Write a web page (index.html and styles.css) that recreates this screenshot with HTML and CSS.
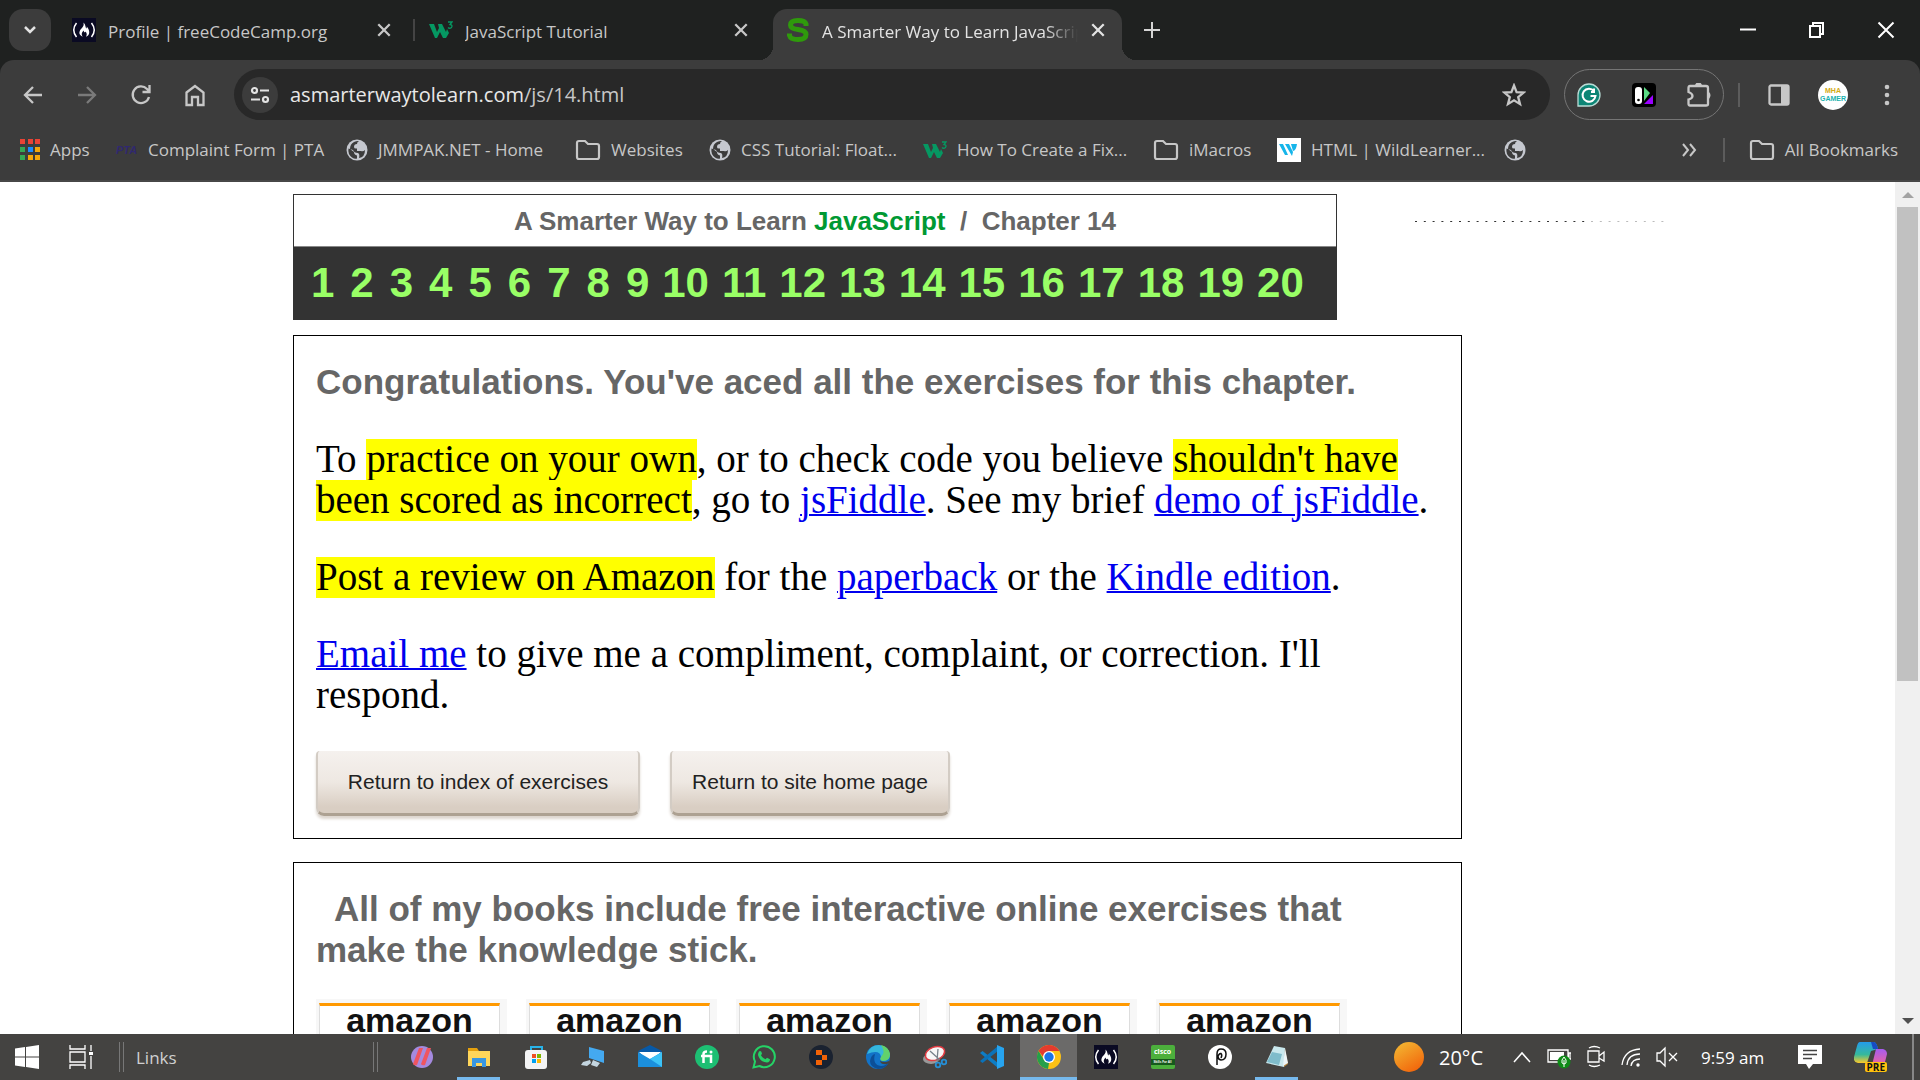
FILE: index.html
```html
<!DOCTYPE html>
<html lang="en">
<head>
<meta charset="utf-8">
<title>A Smarter Way to Learn JavaScript</title>
<link rel="stylesheet" href="styles.css">
</head>
<body>
<svg class="defs" aria-hidden="true">
  <symbol id="x" viewBox="0 0 14 14"><path d="M2 2L12 12M12 2L2 12" fill="none" stroke="currentColor" stroke-width="2"/></symbol>
  <symbol id="fcc" viewBox="0 0 24 24"><path fill="#0a0a23" d="M0 0h24v24H0z"/><path d="M4.500 5Q-1 12 4.500 19M19.500 5Q25 12 19.500 19" fill="none" stroke="#fff" stroke-width="1.500"/><path fill="#fff" d="M11.500 4.500C14 7 13 9 14.500 10.500C15 9.500 14.800 9 14.600 8.500C18 12 18.500 17 14 18.700C15.500 16 14.500 14.500 13 13.500C13 15 11.500 14.500 12 12.500C9 14.500 9.500 17 10.800 18.700C5.500 16.500 7.500 12.500 9.500 10.500C11.500 8.500 12 7 11.500 4.500z"/></symbol>
  <symbol id="w3" viewBox="0 0 24 24"><path fill="#059862" d="M0 6h5l3 8 2-4-1-4h4l4 8 1-3 2 4-3 5h-3l-3-6-3 6H6z"/><path d="M19 4h4l-2 2.500q3 .5 1.500 3Q20.500 11 19 9.500" fill="none" stroke="#059862" stroke-width="1.300"/></symbol>
  <symbol id="globe" viewBox="0 0 22 22"><circle cx="11" cy="11" r="10.500" fill="#c5c8cf"/><path fill="#3c3c3c" d="M13 2q-2 1-2 3-3 0-3 3 0 2 3 1.500V12h4q2 1 4-1 0 7-6 8 1-4-1-5-4 0-5-3L2.500 9.500Q1.500 15 6 18.500q3 2 5 1v-3q-3-1-3-3.500L4 10q0-5 4-7 3-1.500 5-1z"/></symbol>
  <symbol id="folder" viewBox="0 0 26 22"><path d="M2 18V4q0-2 2-2h6l3 3h9q2 0 2 2v11q0 2-2 2H4q-2 0-2-2z" fill="none" stroke="#c7c7c7" stroke-width="2.200"/></symbol>
</svg>
<header class="browser">
  <div class="tabstrip">
    <button class="tabsearch" aria-label="Search tabs"><svg width="14" height="10" viewBox="0 0 14 10"><path d="M2 2l5 5 5-5" fill="none" stroke="#e3e3e3" stroke-width="2.500"/></svg></button>
    <div class="tab"><svg class="i24"><use href="#fcc"/></svg><span class="tabtitle">Profile | freeCodeCamp.org</span><button class="close" aria-label="Close tab"><svg width="16" height="16"><use href="#x"/></svg></button></div>
    <div class="tab second"><svg class="i24"><use href="#w3"/></svg><span class="tabtitle">JavaScript Tutorial</span><button class="close" aria-label="Close tab"><svg width="16" height="16"><use href="#x"/></svg></button></div>
    <div class="tab active"><svg class="i24" viewBox="0 0 24 24"><path d="M20 8V6q-1-3.500-8-3.500-7.500 0-7.500 4.500 0 3.500 7.500 4.500 8 1 8 5 0 5-8 5-7.500 0-8.500-4v-2" fill="none" stroke="#2f9a0c" stroke-width="5"/></svg><span class="tabtitle">A Smarter Way to Learn JavaScript</span><button class="close" aria-label="Close tab"><svg width="16" height="16"><use href="#x"/></svg></button></div>
    <button class="newtab" aria-label="New tab"><svg width="16" height="16" viewBox="0 0 16 16"><path d="M8 0v16M0 8h16" stroke="#d5d5d5" stroke-width="2"/></svg></button>
    <div class="winbuttons">
      <button aria-label="Minimize"><svg width="18" height="18"><path d="M1 8.500h16" stroke="#fff" stroke-width="2"/></svg></button>
      <button aria-label="Restore"><svg width="18" height="18"><path d="M2 5h10v11H2zM5 4V2h10v11h-2" fill="none" stroke="#fff" stroke-width="2"/></svg></button>
      <button aria-label="Close"><svg width="18" height="18"><path d="M1.500 1.500l15 15M16.500 1.500l-15 15" stroke="#fff" stroke-width="2"/></svg></button>
    </div>
  </div>
  <div class="toolbar">
    <nav class="navbuttons">
      <button aria-label="Back"><svg class="i24" viewBox="0 0 24 24"><path d="M21 12H4M12 4l-8 8 8 8" fill="none" stroke="#c7c7c7" stroke-width="2.300"/></svg></button>
      <button aria-label="Forward"><svg class="i24" viewBox="0 0 24 24"><path d="M3 12h17M12 4l8 8-8 8" fill="none" stroke="#7a7a7a" stroke-width="2.300"/></svg></button>
      <button aria-label="Reload"><svg class="i24" viewBox="0 0 24 24"><path d="M20 14a8.300 8.300 0 1 1-2-8l2.500 2.500M20.500 2v7h-7" fill="none" stroke="#c7c7c7" stroke-width="2.300"/></svg></button>
      <button aria-label="Home"><svg class="i24" viewBox="0 0 24 24"><path d="M3.500 9.500L12 3l8.500 6.500V22H15v-8H9v8H3.500z" fill="none" stroke="#c7c7c7" stroke-width="2.300"/></svg></button>
    </nav>
    <div class="omnibox">
      <button class="siteinfo" aria-label="Site information"><svg width="20" height="18" viewBox="0 0 20 18"><g fill="none" stroke="#e3e3e3" stroke-width="2.200"><circle cx="4.500" cy="4.500" r="2.500"/><path d="M10 4.500h9M1 13.500h9"/><circle cx="15.500" cy="13.500" r="2.500"/></g></svg></button>
      <div class="url" role="textbox" aria-label="Address">asmarterwaytolearn.com<span>/js/14.html</span></div>
      <button aria-label="Bookmark this tab"><svg class="i24" viewBox="0 0 24 24"><path d="M12 2.500l2.600 6.600 7 .5-5.400 4.500 1.800 7L12 17.300 6 21.100l1.800-7L2.400 9.600l7-.5z" fill="none" stroke="#c7c7c7" stroke-width="2.300"/></svg></button>
    </div>
    <div class="extensions">
      <button aria-label="Grammar checker"><svg class="i24" viewBox="0 0 24 24"><path d="M1 23V12a11 11 0 1 1 11 11z" fill="#0c8575" stroke="#b9dcd6" stroke-width="1.300"/><path d="M17 8a6.500 6.500 0 1 0 1.500 5h-5M17 5.500V9h-3" fill="none" stroke="#fff" stroke-width="2"/></svg></button>
      <button aria-label="Color picker"><svg class="i24" viewBox="0 0 24 24"><rect width="24" height="24" rx="4"/><rect x="3" y="4" width="7" height="17" rx="3" fill="#fff"/><path d="M12 4l6 6-6 8z" fill="#5bdc86"/><path d="M12 21l9-9v9z" fill="#9a00ff"/><circle cx="6.500" cy="17" r="1.300"/></svg></button>
      <button aria-label="Extensions"><svg class="i24" viewBox="0 0 24 24"><path d="M3 3h16q2 0 2 2v16q0 1.500-2 1.500H3q-1.500 0-1.500-2v-4q4-1 4-3.500t-4-4V5Q1.500 3 3 3z" fill="none" stroke="#c7c7c7" stroke-width="2.300"/><path d="M8 3a3 3 0 0 1 7 0zM22 9q3 3 0 7z" fill="#c7c7c7"/></svg></button>
    </div>
    <div class="tools">
      <i class="vsep"></i>
      <button aria-label="Side panel"><svg width="22" height="22"><rect x="1.500" y="1.500" width="19" height="19" rx="1.500" fill="none" stroke="#c7c7c7" stroke-width="2.300"/><path d="M13 1h8v20h-8z" fill="#c7c7c7"/></svg></button>
      <button class="avatar" aria-label="Profile"><span class="gold">MHA</span><span>GAMER</span></button>
      <button class="menu" aria-label="Menu"><svg width="6" height="22"><g fill="#c7c7c7"><circle cx="3" cy="3" r="2.300"/><circle cx="3" cy="11" r="2.300"/><circle cx="3" cy="19" r="2.300"/></g></svg></button>
    </div>
  </div>
  <nav class="bookmarks">
    <a href="#"><svg width="20" height="22"><path fill="#ea4335" d="M0 0h5v5H0zM8 0h5v5H8zM15 0h5v5h-5z"/><path fill="#34a853" d="M0 8h5v5H0zM0 16h5v5H0z"/><path fill="#1a8cff" d="M8 8h5v5H8z"/><path fill="#f5a70a" d="M15 8h5v5h-5zM8 16h5v5H8zM15 16h5v5h-5z"/></svg>Apps</a>
    <a href="#"><span class="pta">PTA</span>Complaint Form | PTA</a>
    <a href="#"><svg class="i22"><use href="#globe"/></svg>JMMPAK.NET - Home</a>
    <a href="#"><svg class="fold"><use href="#folder"/></svg>Websites</a>
    <a href="#"><svg class="i22"><use href="#globe"/></svg>CSS Tutorial: Float...</a>
    <a href="#"><svg class="i24"><use href="#w3"/></svg>How To Create a Fix...</a>
    <a href="#"><svg class="fold"><use href="#folder"/></svg>iMacros</a>
    <a href="#"><svg class="i24" viewBox="0 0 24 24"><path fill="#fff" d="M0 0h24v24H0z"/><path fill="#16b5ea" d="M2 6h4l5 11H8zM8 6h4l4 8-1 4zM14 6h6q-1 7-4 7z"/></svg>HTML | WildLearner...</a>
    <a href="#" aria-label="Bookmark"><svg class="i22"><use href="#globe"/></svg></a>
    <button class="more" aria-label="More bookmarks"><svg width="16" height="14"><path d="M2 1l5 6-5 6M9 1l5 6-5 6" fill="none" stroke="#c7c7c7" stroke-width="2"/></svg></button>
    <i class="vsep"></i>
    <a href="#"><svg class="fold"><use href="#folder"/></svg>All Bookmarks</a>
  </nav>
</header>
<div class="viewport">
  <main class="page">
    <div class="top">
      <section class="chapter">
        <h1>A Smarter Way to Learn <b>JavaScript</b>&nbsp; /&nbsp; Chapter 14</h1>
        <nav class="numbers">
          <div class="ones"><a href="#">1</a><a href="#">2</a><a href="#">3</a><a href="#">4</a><a href="#">5</a><a href="#">6</a><a href="#">7</a><a href="#">8</a><a href="#">9</a></div>
          <div class="tens"><a href="#">10</a><a href="#">11</a><a href="#">12</a><a href="#">13</a><a href="#">14</a><a href="#">15</a><a href="#">16</a><a href="#">17</a><a href="#">18</a><a href="#">19</a><a href="#">20</a></div>
        </nav>
      </section>
      <svg class="dots" width="250" height="1"><path d="M0 .5h170" stroke="#333" stroke-dasharray="2 6.800"/><path d="M176 .5h74" stroke="#bbb" stroke-dasharray="2 6.800"/></svg>
    </div>
    <section class="box">
      <h2>Congratulations. You've aced all the exercises for this chapter.</h2>
      <p>To <mark>practice on your own</mark>, or to check code you believe <mark>shouldn't have<br>been scored as incorrect</mark>, go to <a href="#">jsFiddle</a>. See my brief <a href="#">demo of jsFiddle</a>.</p>
      <p><mark>Post a review on Amazon</mark> for the <a href="#">paperback</a> or the <a href="#">Kindle edition</a>.</p>
      <p><a href="#">Email me</a> to give me a compliment, complaint, or correction. I'll<br>respond.</p>
      <div class="returns"><button class="wide">Return to index of exercises</button><button>Return to site home page</button></div>
    </section>
    <section class="box">
      <h2 class="books">All of my books include free interactive online exercises that<br>make the knowledge stick.</h2>
      <div class="ads">
        <a href="#"><span>amazon</span></a><a href="#"><span>amazon</span></a><a href="#"><span>amazon</span></a><a href="#"><span>amazon</span></a><a href="#"><span>amazon</span></a>
      </div>
    </section>
  </main>
  <div class="scrollbar"><i class="up"></i><i class="thumb"></i><i class="down"></i></div>
</div>
<footer class="taskbar">
  <button class="start" aria-label="Start"><svg class="i24" viewBox="0 0 24 24"><path fill="#fff" d="M0 3.500l10-1.500v9.500H0zM11 2l13-2v11.500H11zM0 12.500h10V22L0 20.500zM11 12.500h13V24l-13-2z"/></svg></button>
  <button class="taskview" aria-label="Task view"><svg width="26" height="24"><path d="M1 0v4h15V0M1 24v-4h15v4M1 7h15v10H1zM22 0v6M22 11v13" fill="none" stroke="#fff" stroke-width="1.300"/><path fill="#fff" d="M20 7h4v3h-4z"/></svg></button>
  <i class="dsep"></i><span class="links">Links</span><i class="dsep"></i>
  <div class="apps">
    <button aria-label="Opera add-on"><svg class="i24" viewBox="0 0 24 24"><circle cx="12" cy="12" r="11" fill="#a58adf"/><path d="M9 3h4L7 20q-3 1-4-1zM17 3h4l-6 17q-3 1-4-1z" fill="#ef5560"/></svg></button>
    <button class="running" aria-label="File Explorer"><svg class="i24" viewBox="0 0 24 24"><path fill="#e5a00d" d="M1 3h9l2 3v3H1z"/><path fill="#ffd65a" d="M1 6h22v15H1z"/><path fill="#3a97e0" d="M5 13h14v9h-4v-4H9v4H5z"/></svg></button>
    <button aria-label="Store"><svg class="i24" viewBox="0 0 24 24"><path d="M7 6V2h11v4" fill="none" stroke="#28b3e8" stroke-width="2"/><rect x="1" y="5" width="22" height="19" rx="3" fill="#f4f4f4"/><path fill="#f04f23" d="M8 9h4v4H8z"/><path fill="#7db700" d="M13 9h4v4h-4z"/><path fill="#00a1f1" d="M8 14h4v4H8z"/><path fill="#fdb900" d="M13 14h4v4h-4z"/></svg></button>
    <button aria-label="Remote desktop"><svg class="i24" viewBox="0 0 24 24"><path fill="#44a9f0" d="M8 2l15 4v12L8 13z"/><path fill="#c4d5df" d="M12 15l7 3-3 4-6-2zM2 17l7-2 1 3-4 3-6-1z"/></svg></button>
    <button aria-label="Mail"><svg class="i24" viewBox="0 0 24 24"><path fill="#0759a7" d="M0 6l12-6 12 6-5 6H5z"/><path fill="#fff" d="M1 7h22l-8 8H9z"/><path fill="#1b8fdc" d="M0 7l12 7 12-7v15H0z"/><path fill="#3cc3f7" d="M24 7v15L12 14z"/></svg></button>
    <button aria-label="Fiverr"><svg class="i24" viewBox="0 0 24 24"><circle cx="12" cy="12" r="12" fill="#1dbf73"/><path d="M6 11h10v7M8.500 18V9q0-2.500 3.500-2.500" fill="none" stroke="#fff" stroke-width="2.500"/><circle cx="16" cy="7" r="1.500" fill="#fff"/></svg></button>
    <button aria-label="WhatsApp"><svg class="i24" viewBox="0 0 24 24"><path d="M1.500 22.500l1.500-6A10.500 10.500 0 1 1 7.500 21z" fill="none" stroke="#25d366" stroke-width="2"/><path d="M7 6.500q2-1.500 3 2l-1 2q2 3 4.500 3.700l1.500-1.500 3 1.500q0 3-3 3.300Q8 17 6 10q0-2 1-3.500z" fill="#25d366"/></svg></button>
    <button aria-label="Replit"><svg class="i24" viewBox="0 0 24 24"><circle cx="12" cy="12" r="12" fill="#1a2230"/><path fill="#f26207" d="M7 5h6v5H7zM13 10h5v5h-5zM7 15h6v5H7z"/></svg></button>
    <button aria-label="Edge"><svg class="i24" viewBox="0 0 24 24"><circle cx="12" cy="12" r="12" fill="#1273c8"/><path d="M1 9Q4 0 13 0q9 1 11 9 0 7-7 7-4-1-2-4Q14 4 1 9z" fill="#35b7dc"/><path d="M15 0q8 2 9 9 0 7-7 7-4-1-2-4 5-5 0-12z" fill="#62d26b"/><path d="M9 9q-3 11 6 12 5 0 8-4-3 7-11 7-8-2-8-8 1-6 5-7z" fill="#0c4f97"/><path d="M14 16q5 2 9 0v2l-2 1q-6 1-7-3z" fill="#444341"/></svg></button>
    <button aria-label="Snipping Tool"><svg class="i24" viewBox="0 0 24 24"><ellipse cx="8" cy="14" rx="8" ry="5" fill="#999"/><ellipse cx="12" cy="8.500" rx="10" ry="6.500" transform="rotate(-20 12 8.500)" fill="#f7f7f7" stroke="#e23b42" stroke-width="1.500"/><path d="M7 6l10 9M15 4l-1 12" stroke="#77818a" stroke-width="1.300"/><g fill="none" stroke="#258fd6" stroke-width="1.800"><circle cx="15" cy="20" r="2.300"/><circle cx="21" cy="17" r="2.300"/></g></svg></button>
    <button aria-label="VS Code"><svg class="i24" viewBox="0 0 24 24"><path d="M0 8l2.500-2L18 18v5z" fill="#0e7dc5"/><path d="M0 16l2.500 2L18 6V1z" fill="#0b72b8"/><path fill="#27a4ef" d="M17 0l7 3v18l-7 3z"/></svg></button>
    <button class="current" aria-label="Chrome"><svg class="i24" viewBox="0 0 24 24"><circle cx="12" cy="12" r="12" fill="#fbc116"/><path fill="#e33b2e" d="M1.600 6a12 12 0 0 1 20.800 0H12L8 14z"/><path fill="#269f4b" d="M1.600 6l5.400 9 5 3-1 6A12 12 0 0 1 1.600 6z"/><circle cx="12" cy="12" r="6" fill="#fff"/><circle cx="12" cy="12" r="4.700" fill="#1a73e8"/></svg></button>
    <button aria-label="freeCodeCamp"><svg class="i24"><use href="#fcc"/></svg></button>
    <button aria-label="Skills for All"><span class="cisco"><b>cisco</b><em>Skills For All</em></span></button>
    <button aria-label="Pensil"><svg class="i24" viewBox="0 0 24 24"><circle cx="12" cy="12" r="12" fill="#fff"/><path d="M9 20V9q0-5 4-5 5 0 5 5 0 6-5 6-3-.5-3-3.500 1-3.500 3-3 1.500 1.500 0 4.500" fill="none" stroke="#111" stroke-width="1.500"/></svg></button>
    <button class="running" aria-label="Notepad"><svg class="i24" viewBox="0 0 24 24"><path fill="#b5833b" d="M20 4l3 15-4 3z"/><path fill="#c9e8ed" d="M9 1l11 2-1 19L1 18z"/><path fill="#7fbccb" d="M7 7l10 2-3 11-12-3z"/><path fill="#eef6f8" d="M20 3l3 15-5 3z"/></svg></button>
  </div>
  <div class="tray">
    <svg class="sun" width="30" height="30"><defs><linearGradient id="sg" x2=".6" y2="1"><stop stop-color="#f3bd35"/><stop offset="1" stop-color="#f2690d"/></linearGradient></defs><circle cx="15" cy="15" r="15" fill="url(#sg)"/></svg>
    <span class="temp">20°C</span>
    <svg class="chev" width="18" height="12"><path d="M1 11l8-9 8 9" fill="none" stroke="#fff" stroke-width="1.500"/></svg>
    <svg class="i24" viewBox="0 0 24 24"><path d="M1 5h20v12H1zM22 8h2v6h-2z" fill="none" stroke="#fff" stroke-width="1.300"/><path fill="#fff" d="M3 7h14v8H3z"/><circle cx="17" cy="17" r="6.500" fill="#0e8a16"/><path d="M17 12q-3 3-2 6 2 2 4 0 1-3-2-6zM17 15v7" fill="none" stroke="#fff"/></svg>
    <svg width="20" height="24"><path d="M2 6h11v11H2zM13 11l5-4v9l-5-3M3 3q5-3 11 0M3 20q5 3 11 0" fill="none" stroke="#fff" stroke-width="1.300"/></svg>
    <svg width="20" height="24"><path d="M1 20Q3 5 19 4M6 20Q7 9 19 9M10 21Q11 14 19 14" fill="none" stroke="#fff" stroke-width="1.300"/><circle cx="17" cy="20" r="1.700" fill="#fff"/></svg>
    <svg width="22" height="24"><path d="M1 8h3l5-5v18l-5-5H1zM13 8l8 8M21 8l-8 8" fill="none" stroke="#fff" stroke-width="1.300"/></svg>
    <time>9:59 am</time>
    <svg class="note" width="24" height="24"><path fill="#fff" d="M0 0h24v19h-9l-4 5-3-5H0z"/><path d="M5 5.500h14M5 9.500h14M5 13.500h9" stroke="#444" stroke-width="1.300"/></svg>
    <span class="copilot"><svg width="33" height="30" viewBox="0 0 33 30"><defs><linearGradient id="c1" x2="0" y2="1"><stop stop-color="#249bec"/><stop offset=".6" stop-color="#36b99b"/><stop offset="1" stop-color="#ffc928"/></linearGradient><linearGradient id="c2" x2="0" y2="1"><stop stop-color="#a65cf0"/><stop offset="1" stop-color="#ff6687"/></linearGradient></defs><path d="M6 0h14q3 1 4 7l-7 2-4 12H4q-5-1-4-6L3 4q1-4 3-4z" fill="url(#c1)"/><path d="M17 0h3q3 1 4 7h-5z" fill="#174bc3"/><path d="M22 7h7q4 1 4 5l-3 12q-1 3-4 3h-9z" fill="url(#c2)"/></svg><b>PRE</b></span>
    <i class="peek"></i>
  </div>
</footer>
</body>
</html>
```
FILE: styles.css
```css
* { box-sizing: border-box; }
body { margin: 0; height: 100vh; display: flex; flex-direction: column; overflow: hidden; background: #fff; font-family: "Open Sans", "Noto Sans", sans-serif; }
button { border: 0; padding: 0; background: none; color: inherit; font: inherit; display: flex; align-items: center; justify-content: center; }
svg { display: block; flex: none; }
.defs { position: absolute; width: 0; height: 0; }
.i24 { width: 24px; height: 24px; }
.i22 { width: 22px; height: 22px; }
.fold { width: 26px; height: 22px; }

.browser { flex: none; background: #1f2120; color: #c7c7c7; font-size: 17px; }
.tabstrip { height: 60px; display: flex; align-items: center; padding-left: 9px; }
.tabsearch { width: 42px; height: 42px; border-radius: 14px; background: #3c3c3c; margin-right: 9px; }
.tab { display: flex; align-items: center; gap: 12px; width: 353px; height: 42px; padding: 0 21px 0 12px; }
.tab.second { border-image: linear-gradient(transparent 24%, #444 24%, #444 76%, transparent 76%) 1; border-left: 2px solid; padding: 0 24px 0 14px; width: 360px; }
.tab.active { width: 349px; height: 51px; align-self: flex-end; background: #3c3c3c; border-radius: 14px 14px 0 0; color: #e3e3e3; padding: 0 16px 9px 13px; position: relative; }
.tab.active::before, .tab.active::after { content: ""; position: absolute; bottom: 0; width: 14px; height: 14px; }
.tab.active::before { left: -14px; background: radial-gradient(circle at 0 0, transparent 14px, #3c3c3c 14px); }
.tab.active::after { right: -14px; background: radial-gradient(circle at 100% 0, transparent 14px, #3c3c3c 14px); }
.tabtitle { flex: 1; padding-top: 2px; white-space: nowrap; overflow: hidden; }
.active .tabtitle { mask-image: linear-gradient(to right, #000 87%, transparent); }
.newtab { width: 60px; height: 40px; }
.winbuttons { margin-left: auto; display: flex; }
.winbuttons button { width: 69px; height: 60px; }

.toolbar { height: 69px; display: flex; align-items: center; background: #3c3c3c; border-radius: 14px 14px 0 0; padding-left: 6px; }
.navbuttons { display: flex; }
.navbuttons button { width: 54px; height: 51px; }
.omnibox { flex: 1; height: 51px; margin-left: 12px; padding: 0 24px 0 8px; border-radius: 26px; background: #282828; display: flex; align-items: center; gap: 12px; }
.siteinfo { width: 36px; height: 36px; border-radius: 50%; background: #3c3c3c; }
.url { flex: 1; font-size: 20px; color: #e8e8e8; }
.url span { color: #c7c7c7; }
.extensions { margin-left: 14px; width: 160px; height: 51px; border: 1px solid #757575; border-radius: 26px; display: flex; align-items: center; justify-content: space-between; padding: 0 12px; }
.tools { display: flex; align-items: center; gap: 28px; padding: 0 30px 0 14px; }
.vsep { width: 2px; height: 24px; background: #5c5c5c; }
.avatar { width: 30px; height: 30px; border-radius: 50%; background: #fff; color: #1bb3b0; font: bold 7px/8px "Liberation Sans", sans-serif; flex-direction: column; }
.gold { color: #d3ab16; }
.menu { padding-left: 8px; }

.bookmarks { height: 53px; padding: 0 22px 10px 20px; background: #3c3c3c; border-bottom: 2px solid #474747; display: grid; grid-template-columns: 96px 230px 229px 134px 214px 230px 124px 227px 1fr 42px 26px auto; align-items: center; }
.bookmarks a { display: flex; align-items: center; gap: 10px; color: inherit; text-decoration: none; white-space: nowrap; }
.more { justify-content: flex-start; }
.pta { width: 22px; font: italic bold 11px "Liberation Sans", sans-serif; color: #30286f; }

.viewport { flex: 1; min-height: 0; display: flex; overflow: hidden; }
.page { flex: 1; padding: 12px 0 0 293px; overflow: hidden; }
.top { display: flex; margin-bottom: 15px; }
.chapter { width: 1044px; border: 1px solid #333; background: #333; }
.chapter h1 { margin: 0; height: 52px; border-bottom: 1px solid #888; background: #fff; color: #666; text-align: center; font: bold 26px/52px "Liberation Sans", sans-serif; }
.chapter b { color: #093; }
.numbers { height: 72px; display: flex; gap: 13px; padding: 11px 0 0 17px; font: bold 42px/50px "Liberation Sans", sans-serif; }
.numbers div { display: flex; }
.numbers a { color: #9f6; text-decoration: none; }
.ones { gap: 16px; }
.tens { gap: 13px; }
.dots { margin: 27px 0 0 78px; }
.box { width: 1169px; border: 1px solid #000; padding: 0 22px; margin-bottom: 23px; }
.box h2 { margin: 25px 0 36px; color: #666; font: bold 35px/41px "Liberation Sans", sans-serif; white-space: nowrap; }
.box .books { text-indent: 18px; margin-bottom: 29px; }
.box p { margin: 0 0 36px; font: 39px/41px "Liberation Serif", serif; white-space: nowrap; }
.box p a { color: #00e; text-decoration-thickness: 2px; }
mark { background: linear-gradient(transparent 2px, #ff0 2px, #ff0 43px, transparent 43px); -webkit-box-decoration-break: clone; box-decoration-break: clone; }
.returns { display: flex; gap: 30px; margin-bottom: 18px; }
.returns button { width: 280px; height: 65px; margin-bottom: 4px; border: 2px solid #d3ccc4; border-top-width: 0; border-bottom: 3px solid #ada192; border-radius: 4px 4px 8px 8px; background: linear-gradient(#f5f1ee, #eee8e2 50%, #d9cec3 90%); box-shadow: 0 3px 3px #ddd6cf; color: #222; font: 21px "Liberation Sans", sans-serif; }
.returns .wide { width: 324px; }
.ads { display: flex; gap: 19px; height: 250px; }
.ads a { width: 191px; padding: 4px 7px 0 3px; background: #f7f7f7; text-decoration: none; }
.ads span { display: block; height: 240px; border: 1px solid #ddd; border-top: 3px solid #f90; background: #fff; color: #111; text-align: center; font: bold 34px/28px "Liberation Sans", sans-serif; }

.scrollbar { width: 25px; background: #f0f0f0; display: flex; flex-direction: column; align-items: center; padding: 10px 0; }
.up, .down { border: 6px solid transparent; }
.up { border-top-width: 0; border-bottom-color: #a3a3a3; }
.down { border-bottom-width: 0; border-top-color: #505050; margin-top: auto; }
.thumb { width: 21px; height: 57%; margin-top: 9px; background: #c1c1c1; }

.taskbar { flex: none; height: 46px; display: flex; align-items: center; background: #444341; color: #fff; font-size: 18px; }
.start { margin-left: 15px; }
.taskview { margin: 0 24px 0 30px; }
.dsep { width: 5px; height: 30px; border: solid #777; border-width: 0 1px; }
.links { width: 249px; padding-left: 12px; color: #d0d0d0; font-size: 17px; }
.apps { display: flex; margin-left: 15px; height: 100%; }
.apps button { width: 57px; height: 46px; }
.apps .running { background: linear-gradient(#76b9ed, #76b9ed) center bottom / 43px 3px no-repeat; }
.apps .current { background: linear-gradient(#76b9ed, #76b9ed) center bottom / 100% 3px no-repeat #6b6a69; }
.cisco { width: 24px; height: 24px; background: #4caf3c; border-radius: 2px; color: #fff; display: flex; flex-direction: column; justify-content: space-between; font-size: 7px; line-height: 14px; }
.cisco em { font: bold 3px/6px "Liberation Sans", sans-serif; background: #17591d; margin-bottom: 4px; }
.tray { margin-left: auto; display: flex; align-items: center; }
.temp { margin: 0 28px 0 15px; font-size: 20px; width: 46px; white-space: nowrap; }
.chev { margin-right: 16px; }
.tray svg + svg { margin-right: 15px; }
.tray time { width: 75px; margin: 0 22px 0 8px; white-space: nowrap; font-size: 17px; }
.copilot { position: relative; margin: 0 25px 0 32px; }
.copilot b { position: absolute; right: 0; bottom: 0; background: #ffc20e; color: #111; font: bold 10px/10px "Open Sans", sans-serif; border-radius: 2px; padding: 0 2px; }
.peek { width: 2px; height: 46px; background: #888; margin-right: 6px; }
```
